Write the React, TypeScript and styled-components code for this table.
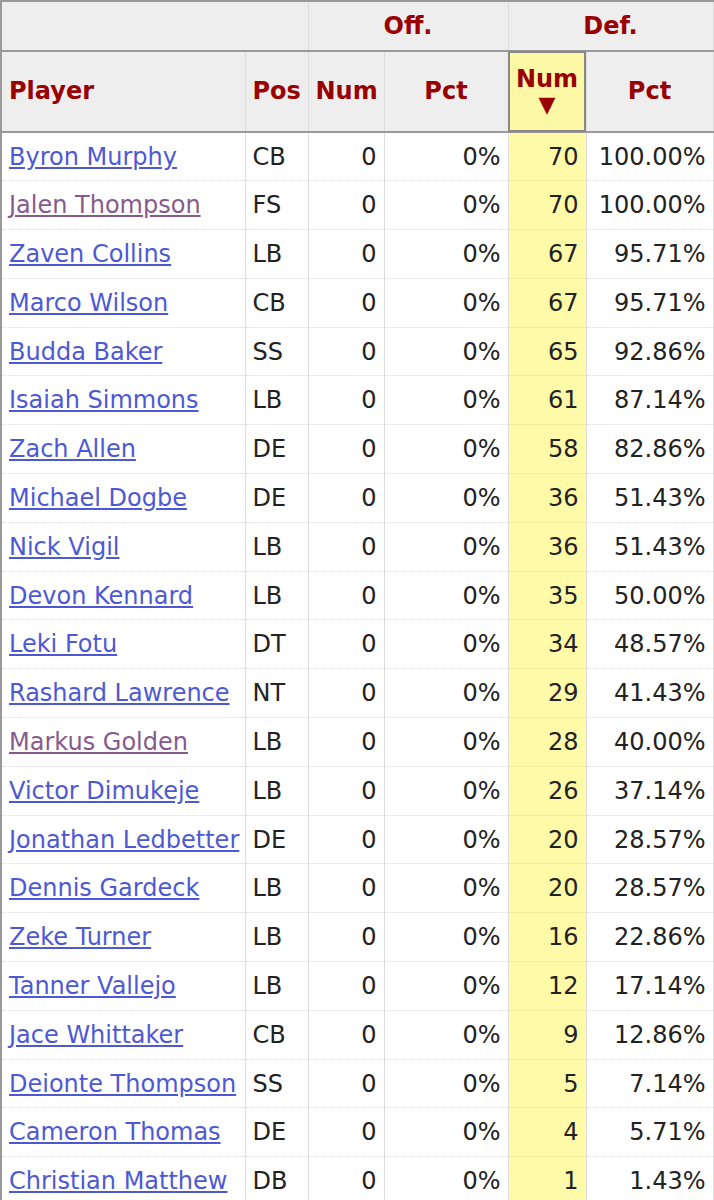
import React from "react";
import styled, { createGlobalStyle } from "styled-components";

const GlobalStyle = createGlobalStyle`
  html, body {
    margin: 0;
    padding: 0;
    background: #fff;
  }
  body {
    font-family: "DejaVu Sans", Verdana, sans-serif;
  }
`;

const Table = styled.table`
  border-collapse: collapse;
  table-layout: fixed;
  width: 712px;
  font-size: 24px;
  color: #222;
  border-top: 2px solid #999;
  border-left: 2px solid #999;
  border-right: 1px solid #ddd;
`;

const GroupRow = styled.tr`
  height: 50px;
  background: #eee;
  border-bottom: 2px solid #999;
`;

const GroupCell = styled.th`
  color: #900;
  font-weight: bold;
  text-align: center;
  border-left: 1px solid #ddd;
  padding: 0;
`;

const HeadRow = styled.tr`
  height: 81px;
  background: #eee;
  border-bottom: 2px solid #999;
`;

const HeadCell = styled.th<{ $align?: string; $sorted?: boolean }>`
  color: #900;
  font-weight: bold;
  text-align: ${(p) => p.$align || "center"};
  padding: 0 7px;
  line-height: 1.15;
  border-left: 1px solid #ddd;
  background: ${(p) => (p.$sorted ? "#fdf8a6" : "transparent")};
  ${(p) => (p.$sorted ? "outline: 2px solid #888; outline-offset: -2px;" : "")}
`;

const Arrow = styled.span`
  display: block;
  font-size: 22px;
  line-height: 1.1;
`;

const Row = styled.tr`
  height: 48.8px;
  border-bottom: 1px dotted #ddd;
`;

const Cell = styled.td<{ $align?: string; $sorted?: boolean }>`
  padding: 0 7px;
  text-align: ${(p) => p.$align || "right"};
  border-left: 1px solid #ddd;
  white-space: nowrap;
  background: ${(p) => (p.$sorted ? "#fffaa8" : "transparent")};
`;

const PlayerLink = styled.a<{ $visited?: boolean }>`
  color: ${(p) => (p.$visited ? "#875a8c" : "#4d59d4")};
  text-decoration: underline;
  text-underline-offset: 2px;
`;

type Player = {
  name: string;
  pos: string;
  num: number;
  pct: string;
  visited?: boolean;
};

const players: Player[] = [
  { name: "Byron Murphy", pos: "CB", num: 70, pct: "100.00%" },
  { name: "Jalen Thompson", pos: "FS", num: 70, pct: "100.00%", visited: true },
  { name: "Zaven Collins", pos: "LB", num: 67, pct: "95.71%" },
  { name: "Marco Wilson", pos: "CB", num: 67, pct: "95.71%" },
  { name: "Budda Baker", pos: "SS", num: 65, pct: "92.86%" },
  { name: "Isaiah Simmons", pos: "LB", num: 61, pct: "87.14%" },
  { name: "Zach Allen", pos: "DE", num: 58, pct: "82.86%" },
  { name: "Michael Dogbe", pos: "DE", num: 36, pct: "51.43%" },
  { name: "Nick Vigil", pos: "LB", num: 36, pct: "51.43%" },
  { name: "Devon Kennard", pos: "LB", num: 35, pct: "50.00%" },
  { name: "Leki Fotu", pos: "DT", num: 34, pct: "48.57%" },
  { name: "Rashard Lawrence", pos: "NT", num: 29, pct: "41.43%" },
  { name: "Markus Golden", pos: "LB", num: 28, pct: "40.00%", visited: true },
  { name: "Victor Dimukeje", pos: "LB", num: 26, pct: "37.14%" },
  { name: "Jonathan Ledbetter", pos: "DE", num: 20, pct: "28.57%" },
  { name: "Dennis Gardeck", pos: "LB", num: 20, pct: "28.57%" },
  { name: "Zeke Turner", pos: "LB", num: 16, pct: "22.86%" },
  { name: "Tanner Vallejo", pos: "LB", num: 12, pct: "17.14%" },
  { name: "Jace Whittaker", pos: "CB", num: 9, pct: "12.86%" },
  { name: "Deionte Thompson", pos: "SS", num: 5, pct: "7.14%" },
  { name: "Cameron Thomas", pos: "DE", num: 4, pct: "5.71%" },
  { name: "Christian Matthew", pos: "DB", num: 1, pct: "1.43%" },
];

export default function App() {
  return (
    <>
      <GlobalStyle />
      <Table>
        <colgroup>
          <col style={{ width: 244 }} />
          <col style={{ width: 63 }} />
          <col style={{ width: 76 }} />
          <col style={{ width: 124 }} />
          <col style={{ width: 78 }} />
          <col style={{ width: 127 }} />
        </colgroup>
        <thead>
          <GroupRow>
            <GroupCell colSpan={2} />
            <GroupCell colSpan={2}>Off.</GroupCell>
            <GroupCell colSpan={2}>Def.</GroupCell>
          </GroupRow>
          <HeadRow>
            <HeadCell $align="left">Player</HeadCell>
            <HeadCell>Pos</HeadCell>
            <HeadCell>Num</HeadCell>
            <HeadCell>Pct</HeadCell>
            <HeadCell $sorted>
              Num
              <Arrow>▼</Arrow>
            </HeadCell>
            <HeadCell>Pct</HeadCell>
          </HeadRow>
        </thead>
        <tbody>
          {players.map((p) => (
            <Row key={p.name}>
              <Cell $align="left">
                <PlayerLink href="#" $visited={p.visited}>
                  {p.name}
                </PlayerLink>
              </Cell>
              <Cell $align="left">{p.pos}</Cell>
              <Cell>0</Cell>
              <Cell>0%</Cell>
              <Cell $sorted>{p.num}</Cell>
              <Cell>{p.pct}</Cell>
            </Row>
          ))}
        </tbody>
      </Table>
    </>
  );
}
